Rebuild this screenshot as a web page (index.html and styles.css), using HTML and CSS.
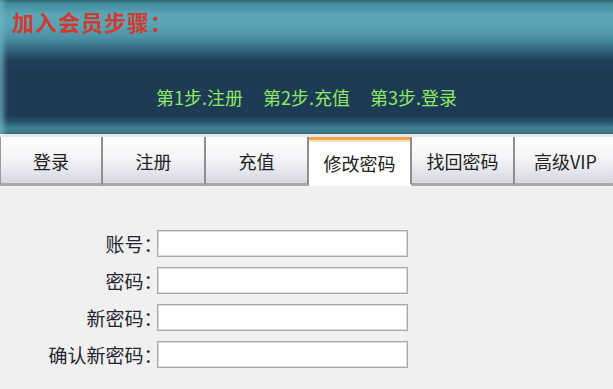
FILE: index.html
```html
<!DOCTYPE html>
<html lang="zh-CN">
<head>
<meta charset="utf-8">
<title>修改密码</title>
<link rel="stylesheet" href="styles.css">
</head>
<body>
<div class="banner">
  <div class="banner-title">加入会员步骤：</div>
  <div class="steps">
    <span>第1步.注册</span>
    <span>第2步.充值</span>
    <span>第3步.登录</span>
  </div>
</div>
<div class="tabs">
  <div class="tab">登录</div>
  <div class="tab">注册</div>
  <div class="tab">充值</div>
  <div class="tab active">修改密码</div>
  <div class="tab">找回密码</div>
  <div class="tab">高级VIP</div>
</div>
<div class="content">
  <form class="form">
    <label class="label" for="acc">账号：</label>
    <input class="field" id="acc" type="text">
    <label class="label" for="pwd">密码：</label>
    <input class="field" id="pwd" type="password">
    <label class="label" for="npwd">新密码：</label>
    <input class="field" id="npwd" type="password">
    <label class="label" for="cpwd">确认新密码：</label>
    <input class="field" id="cpwd" type="password">
  </form>
</div>
</body>
</html>
```
FILE: styles.css
```css
html, body {
  margin: 0;
  padding: 0;
  height: 100%;
}
body {
  font-family: "Noto Sans CJK SC", "Liberation Sans", sans-serif;
  background: #f0f0f0;
  overflow: hidden;
  display: flex;
  flex-direction: column;
}
.banner {
  height: 134px;
  flex: 0 0 134px;
  box-sizing: border-box;
  background: linear-gradient(to bottom,
    #1c4d5a 0px, #3e8898 3px, #5aa6b6 14px, #58a4b5 26px, #4a8fa4 38px,
    #30667e 50px, #213f5b 60px, #1e3b56 70px, #1e3b56 116px,
    #27566e 122px, #3f8195 128px, #3a7588 132px, #244e60 134px);
  box-shadow: inset 5px 0 5px -1px rgba(110, 180, 195, 0.75);
  padding: 8px 0 0 12px;
  display: flex;
  flex-direction: column;
}
.banner-title {
  color: #d13b2f;
  font-size: 22px;
  line-height: 26px;
  font-weight: bold;
  letter-spacing: 1px;
  font-feature-settings: "halt";
}
.steps {
  margin-top: 52px;
  display: flex;
  justify-content: center;
  gap: 20px;
  color: #8fe862;
  font-size: 18px;
  line-height: 22px;
  padding-right: 12px;
}
.tabs {
  flex: 0 0 52px;
  height: 52px;
  box-sizing: border-box;
  display: flex;
  overflow: hidden;
  border-top: 3px solid #e6e6ee;
  background: #f0f0f0;
}
.tab {
  position: relative;
  flex: 0 0 103px;
  box-sizing: border-box;
  border-right: 2px solid #8e8e8e;
  border-bottom: 3px solid #a9a9ad;
  background: linear-gradient(to bottom, #fdfdfd 0%, #f5f5f8 45%, #d7d7e3 100%);
  display: flex;
  align-items: center;
  justify-content: center;
  color: #222;
  font-size: 18px;
  padding-top: 1px;
}
.tab:first-child {
  border-left: 1px solid #9a9a9a;
}
.tab::before {
  content: "";
  position: absolute;
  top: -3px;
  right: -3px;
  width: 4px;
  height: 3px;
  border-radius: 2px;
  background: #b48ae0;
}
.tab.active {
  background: #ffffff;
  border-bottom-color: #ffffff;
  box-shadow: inset 0 3px 0 #f2a848, inset 0 5px 0 #fbe0b8;
  padding-top: 5px;
}
.content {
  flex: 1;
  background: #f0f0f0;
  padding-top: 44px;
}
.form {
  display: grid;
  grid-template-columns: 153px 251px;
  column-gap: 4px;
  row-gap: 10px;
  margin: 0;
}
.label {
  text-align: right;
  font-size: 19px;
  line-height: 27px;
  color: #262630;
  font-feature-settings: "halt";
  white-space: nowrap;
}
.field {
  height: 27px;
  box-sizing: border-box;
  margin: 0;
  padding: 0 4px;
  border: 1px solid #a9a9a9;
  box-shadow: inset 0 0 0 1px #dadada;
  background: #fff;
  outline: none;
}
```
